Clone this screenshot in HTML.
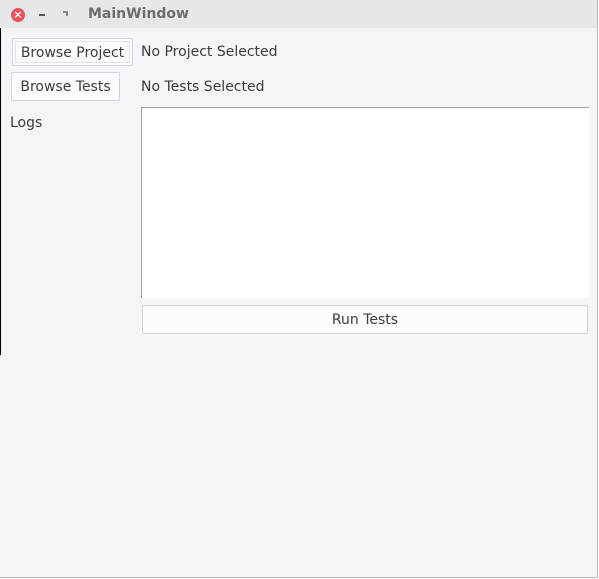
<!DOCTYPE html>
<html><head><meta charset="utf-8"><style>
*{margin:0;padding:0;box-sizing:border-box}
body{width:599px;height:579px;background:#fff;font-family:"DejaVu Sans","Liberation Sans",sans-serif;font-size:14px;color:#3c3c3c;position:relative;overflow:hidden}
.win{position:absolute;left:0;top:0;width:598px;height:578px;background:#f4f5f7;border-right:1px solid #b9b9b9;border-bottom:1px solid #b9b9b9}
.title{position:absolute;left:0;top:0;width:597px;height:28px;background:#e6e7ea}
.t{position:absolute;white-space:nowrap}
.btn{position:absolute;background:#fbfcfd;border:1px solid #cfd5e3;border-radius:2px;text-align:center;font-size:14px;color:#3c3c3c}
</style></head><body>
<div class="win">
<div class="title">
<div style="position:absolute;left:11px;top:8px;width:14px;height:14px;border-radius:50%;background:#e9555a;color:#fff;font-size:11px;line-height:14px;text-align:center;font-weight:bold">×</div>
<div style="position:absolute;left:39px;top:14px;width:6px;height:2px;background:#555"></div>
<div style="position:absolute;left:63px;top:11px;width:5px;height:5px;border-top:2px solid #888;border-right:2px solid #888"></div>
<div class="t" style="left:88px;top:6px;font-weight:bold;font-size:14px;color:#6b6b70">MainWindow</div>
</div>
<div style="position:absolute;left:0;top:28px;width:1px;height:327px;background:#000"></div>
<div class="btn" style="left:12px;top:38px;width:121px;height:28px;line-height:28px;box-shadow:inset 0 0 0 2px #fbfcfd,inset 0 0 0 3px #dfe3ec">Browse Project</div>
<div class="t" style="left:141px;top:44px">No Project Selected</div>
<div class="btn" style="left:11px;top:72px;width:109px;height:29px;line-height:29px">Browse Tests</div>
<div class="t" style="left:141px;top:79px">No Tests Selected</div>
<div class="t" style="left:10px;top:115px">Logs</div>
<div style="position:absolute;left:141px;top:107px;width:448px;height:191px;background:#fff;border-top:1px solid #9ea3a8;border-left:1px solid #9ea3a8"></div>
<div class="btn" style="left:142px;top:305px;width:446px;height:29px;line-height:29px">Run Tests</div>
</div>
</body></html>
